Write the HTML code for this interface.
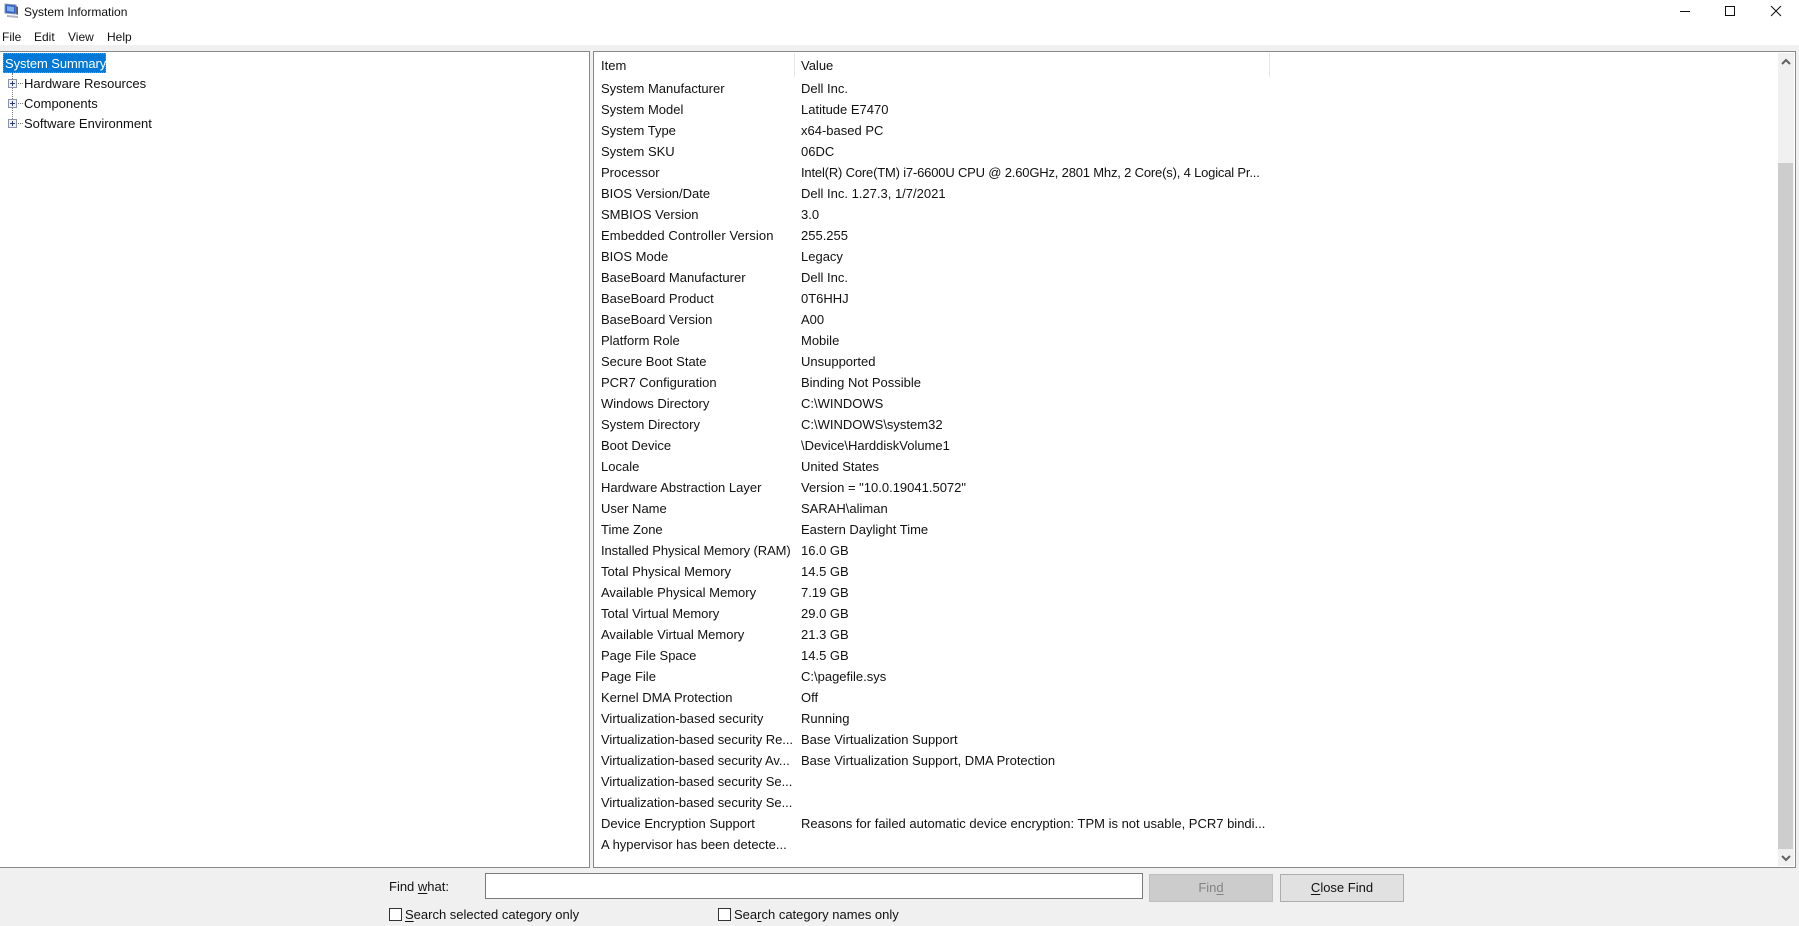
<!DOCTYPE html>
<html><head><meta charset="utf-8"><title>System Information</title>
<style>
html,body{margin:0;padding:0;width:1799px;height:926px;overflow:hidden;background:#fff}
body{position:relative;font-family:"Liberation Sans",sans-serif;font-size:13px;color:#111}
.a{position:absolute}
.t{position:absolute;white-space:nowrap;line-height:18px;height:18px}
.s{font-size:12px}
u{text-underline-offset:2px}
.pl{position:absolute;left:8px;width:9px;height:9px;box-sizing:border-box;border:1px solid #8a94a6;background:#eef0f4}
.pl:before{content:"";position:absolute;left:1px;right:1px;top:3px;height:1px;background:#2b3a7a}
.pl:after{content:"";position:absolute;top:1px;bottom:1px;left:3px;width:1px;background:#2b3a7a}
.dh{position:absolute;left:18px;width:5px;border-top:1px dotted #777}
</style></head><body>
<svg class="a" style="left:4px;top:3px" width="15" height="16" viewBox="0 0 15 16"><path d="M1 1L12 2V11L1 10Z" fill="#2f5fc0" stroke="#8a97b5"/><path d="M3 3L10 4V9L3 8Z" fill="#7fb0ee"/><path d="M3 12L14 13V15L3 14Z" fill="#aeb4c0"/><path d="M12 3L14 4V12L12 11Z" fill="#58627a"/></svg>
<div class="t s" style="left:24px;top:3px">System Information</div>
<svg class="a" style="left:1680px;top:5px" width="119" height="16" viewBox="0 0 119 16" fill="none" stroke="#111"><path d="M0 6.5H10"/><rect x="45.5" y="1.5" width="9" height="9"/><path d="M91 1L101 11M101 1L91 11"/></svg>
<div class="t s" style="left:2px;top:28px">File</div>
<div class="t s" style="left:34px;top:28px">Edit</div>
<div class="t s" style="left:68px;top:28px">View</div>
<div class="t s" style="left:107px;top:28px">Help</div>
<div class="a" style="left:0;top:45px;width:1799px;height:881px;background:#f0f0f0"></div>
<div class="a" style="left:0;top:51px;width:590px;height:817px;box-sizing:border-box;background:#fff;border:1px solid #888;border-left:0"></div>
<div class="a" style="left:593px;top:51px;width:1203px;height:817px;box-sizing:border-box;background:#fff;border:1px solid #888"></div>
<div class="a" style="left:3px;top:53px;width:103px;height:20px;box-sizing:border-box;background:#0078d7;border:1px dotted #d9822b"></div>
<div class="t" style="left:5px;top:55px;color:#fff;letter-spacing:-.1px">System Summary</div>
<div class="a" style="left:12px;top:73px;height:46px;border-left:1px dotted #777"></div>
<div class="pl" style="top:79px"></div><div class="dh" style="top:83px"></div>
<div class="pl" style="top:99px"></div><div class="dh" style="top:103px"></div>
<div class="pl" style="top:119px"></div><div class="dh" style="top:123px"></div>
<div class="t" style="left:24px;top:75px">Hardware Resources</div>
<div class="t" style="left:24px;top:95px">Components</div>
<div class="t" style="left:24px;top:115px">Software Environment</div>
<div class="t" style="left:601px;top:57px">Item</div>
<div class="t" style="left:801px;top:57px">Value</div>
<div class="a" style="left:794px;top:53px;width:1px;height:24px;background:#e5e5e5"></div>
<div class="a" style="left:1269px;top:53px;width:1px;height:24px;background:#e5e5e5"></div>
<div class="t" style="left:601px;top:80px">System Manufacturer</div><div class="t" style="left:801px;top:80px">Dell Inc.</div>
<div class="t" style="left:601px;top:101px">System Model</div><div class="t" style="left:801px;top:101px">Latitude E7470</div>
<div class="t" style="left:601px;top:122px">System Type</div><div class="t" style="left:801px;top:122px">x64-based PC</div>
<div class="t" style="left:601px;top:143px">System SKU</div><div class="t" style="left:801px;top:143px">06DC</div>
<div class="t" style="left:601px;top:164px">Processor</div><div class="t" style="left:801px;top:164px;letter-spacing:-.18px">Intel(R) Core(TM) i7-6600U CPU @ 2.60GHz, 2801 Mhz, 2 Core(s), 4 Logical Pr...</div>
<div class="t" style="left:601px;top:185px">BIOS Version/Date</div><div class="t" style="left:801px;top:185px">Dell Inc. 1.27.3, 1/7/2021</div>
<div class="t" style="left:601px;top:206px">SMBIOS Version</div><div class="t" style="left:801px;top:206px">3.0</div>
<div class="t" style="left:601px;top:227px;letter-spacing:.1px">Embedded Controller Version</div><div class="t" style="left:801px;top:227px">255.255</div>
<div class="t" style="left:601px;top:248px">BIOS Mode</div><div class="t" style="left:801px;top:248px">Legacy</div>
<div class="t" style="left:601px;top:269px">BaseBoard Manufacturer</div><div class="t" style="left:801px;top:269px">Dell Inc.</div>
<div class="t" style="left:601px;top:290px">BaseBoard Product</div><div class="t" style="left:801px;top:290px">0T6HHJ</div>
<div class="t" style="left:601px;top:311px">BaseBoard Version</div><div class="t" style="left:801px;top:311px">A00</div>
<div class="t" style="left:601px;top:332px">Platform Role</div><div class="t" style="left:801px;top:332px">Mobile</div>
<div class="t" style="left:601px;top:353px">Secure Boot State</div><div class="t" style="left:801px;top:353px">Unsupported</div>
<div class="t" style="left:601px;top:374px">PCR7 Configuration</div><div class="t" style="left:801px;top:374px">Binding Not Possible</div>
<div class="t" style="left:601px;top:395px">Windows Directory</div><div class="t" style="left:801px;top:395px">C:\WINDOWS</div>
<div class="t" style="left:601px;top:416px">System Directory</div><div class="t" style="left:801px;top:416px">C:\WINDOWS\system32</div>
<div class="t" style="left:601px;top:437px">Boot Device</div><div class="t" style="left:801px;top:437px">\Device\HarddiskVolume1</div>
<div class="t" style="left:601px;top:458px">Locale</div><div class="t" style="left:801px;top:458px">United States</div>
<div class="t" style="left:601px;top:479px">Hardware Abstraction Layer</div><div class="t" style="left:801px;top:479px">Version = "10.0.19041.5072"</div>
<div class="t" style="left:601px;top:500px">User Name</div><div class="t" style="left:801px;top:500px">SARAH\aliman</div>
<div class="t" style="left:601px;top:521px">Time Zone</div><div class="t" style="left:801px;top:521px">Eastern Daylight Time</div>
<div class="t" style="left:601px;top:542px;letter-spacing:-.08px">Installed Physical Memory (RAM)</div><div class="t" style="left:801px;top:542px">16.0 GB</div>
<div class="t" style="left:601px;top:563px">Total Physical Memory</div><div class="t" style="left:801px;top:563px">14.5 GB</div>
<div class="t" style="left:601px;top:584px">Available Physical Memory</div><div class="t" style="left:801px;top:584px">7.19 GB</div>
<div class="t" style="left:601px;top:605px">Total Virtual Memory</div><div class="t" style="left:801px;top:605px">29.0 GB</div>
<div class="t" style="left:601px;top:626px">Available Virtual Memory</div><div class="t" style="left:801px;top:626px">21.3 GB</div>
<div class="t" style="left:601px;top:647px">Page File Space</div><div class="t" style="left:801px;top:647px">14.5 GB</div>
<div class="t" style="left:601px;top:668px">Page File</div><div class="t" style="left:801px;top:668px">C:\pagefile.sys</div>
<div class="t" style="left:601px;top:689px">Kernel DMA Protection</div><div class="t" style="left:801px;top:689px">Off</div>
<div class="t" style="left:601px;top:710px">Virtualization-based security</div><div class="t" style="left:801px;top:710px">Running</div>
<div class="t" style="left:601px;top:731px;letter-spacing:-.04px">Virtualization-based security Re...</div><div class="t" style="left:801px;top:731px">Base Virtualization Support</div>
<div class="t" style="left:601px;top:752px;letter-spacing:-.04px">Virtualization-based security Av...</div><div class="t" style="left:801px;top:752px">Base Virtualization Support, DMA Protection</div>
<div class="t" style="left:601px;top:773px;letter-spacing:-.04px">Virtualization-based security Se...</div>
<div class="t" style="left:601px;top:794px;letter-spacing:-.04px">Virtualization-based security Se...</div>
<div class="t" style="left:601px;top:815px">Device Encryption Support</div><div class="t" style="left:801px;top:815px">Reasons for failed automatic device encryption: TPM is not usable, PCR7 bindi...</div>
<div class="t" style="left:601px;top:836px">A hypervisor has been detecte...</div>
<div class="a" style="left:1778px;top:53px;width:16px;height:813px;background:#f0f0f0"></div>
<div class="a" style="left:1778px;top:163px;width:15px;height:686px;background:#cdcdcd"></div>
<svg class="a" style="left:1781px;top:58px" width="10" height="8" viewBox="0 0 10 8"><path d="M1 6L5 2L9 6" fill="none" stroke="#606060" stroke-width="2"/></svg>
<svg class="a" style="left:1781px;top:854px" width="10" height="8" viewBox="0 0 10 8"><path d="M1 2L5 6L9 2" fill="none" stroke="#606060" stroke-width="2"/></svg>
<div class="t" style="left:389px;top:878px">Find <u>w</u>hat:</div>
<div class="a" style="left:485px;top:873px;width:658px;height:26px;box-sizing:border-box;background:#fff;border:1px solid #7a7a7a"></div>
<div class="a" style="left:1149px;top:874px;width:124px;height:28px;box-sizing:border-box;background:#ccc;border:1px solid #bfbfbf;color:#838383;text-align:center;line-height:26px">Fin<u>d</u></div>
<div class="a" style="left:1280px;top:874px;width:124px;height:28px;box-sizing:border-box;background:#e1e1e1;border:1px solid #adadad;text-align:center;line-height:26px"><u>C</u>lose Find</div>
<div class="a" style="left:389px;top:908px;width:13px;height:13px;box-sizing:border-box;background:#fff;border:1px solid #333"></div>
<div class="t" style="left:405px;top:906px"><u>S</u>earch selected category only</div>
<div class="a" style="left:718px;top:908px;width:13px;height:13px;box-sizing:border-box;background:#fff;border:1px solid #333"></div>
<div class="t" style="left:734px;top:906px">Sea<u>r</u>ch category names only</div>
</body></html>
